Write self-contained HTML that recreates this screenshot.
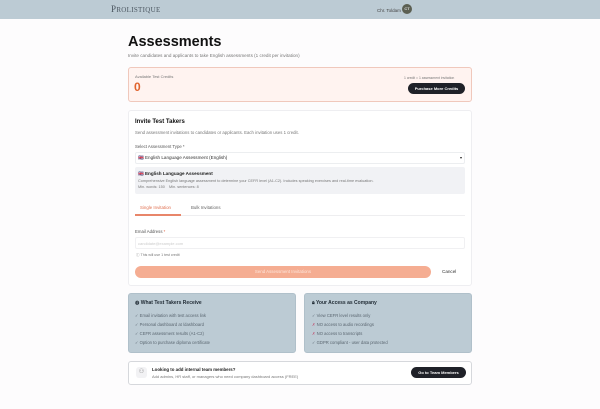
<!DOCTYPE html>
<html><head><style>
*{margin:0;padding:0;box-sizing:border-box}
body{width:600px;height:409px;background:#fdfcfd;font-family:"Liberation Sans",sans-serif;position:relative;overflow:hidden;color:#222}
.a{position:absolute}
.hdr{left:0;top:0;width:600px;height:19px;background:#bccbd4}
.s{font-size:4.3px;color:#777}
</style></head><body>
<div class="a hdr"></div>
<div class="a" style="left:111px;top:4px;font-family:'Liberation Serif',serif;font-size:9px;color:#4b5660;letter-spacing:.3px">P<span style="font-size:7px">ROLISTIQUE</span></div>
<div class="a" style="left:377px;top:8px;font-size:4.5px;color:#444">Chr. Toldam</div>
<div class="a" style="left:402px;top:4px;width:10px;height:10px;border-radius:50%;background:#5b5f52;color:#ddd;font-size:4px;text-align:center;line-height:10px;font-weight:bold">CT</div>

<div class="a" style="left:128px;top:34px;font-size:14.5px;font-weight:bold;color:#111">Assessments</div>
<div class="a s" style="left:128px;top:53px;font-size:4.6px">Invite candidates and applicants to take English assessments (1 credit per invitation)</div>

<div class="a" style="left:128px;top:67px;width:344px;height:35px;background:#fff3f0;border:1px solid #f0c8bc;border-radius:3px"></div>
<div class="a s" style="left:135px;top:74px;font-size:4px">Available Test Credits</div>
<div class="a" style="left:134px;top:80px;font-size:12px;font-weight:bold;color:#e0622c">0</div>
<div class="a s" style="left:404px;top:76px;font-size:3.4px">1 credit = 1 assessment invitation</div>
<div class="a" style="left:408px;top:83px;width:57px;height:11px;background:#1f2128;border-radius:6px;color:#fff;font-size:4px;font-weight:bold;text-align:center;line-height:11px">Purchase More Credits</div>

<div class="a" style="left:128px;top:110px;width:344px;height:176px;background:#fff;border:1px solid #eeeef1;border-radius:3px"></div>
<div class="a" style="left:135px;top:119px;font-size:6px;font-weight:bold;color:#111">Invite Test Takers</div>
<div class="a s" style="left:135px;top:130px">Send assessment invitations to candidates or applicants. Each invitation uses 1 credit.</div>
<div class="a s" style="left:135px;top:144px;color:#555">Select Assessment Type *</div>
<div class="a" style="left:135px;top:152px;width:330px;height:12px;border:1px solid #eceef0;border-radius:2px"></div>
<div class="a" style="left:138px;top:155px;font-size:4.6px;color:#333">🇬🇧 English Language Assessment (English)</div>
<div class="a" style="left:460px;top:155px;font-size:4px">▾</div>
<div class="a" style="left:135px;top:167px;width:330px;height:27px;background:#f1f2f5;border-radius:2px"></div>
<div class="a" style="left:138px;top:171px;font-size:4.6px;font-weight:bold;color:#222">🇬🇧 English Language Assessment</div>
<div class="a s" style="left:138px;top:179px;font-size:3.8px">Comprehensive English language assessment to determine your CEFR level (A1-C2). Includes speaking exercises and real-time evaluation.</div>
<div class="a s" style="left:138px;top:185px;font-size:3.8px">Min. words: 150 &nbsp;&nbsp; Min. sentences: 8</div>
<div class="a" style="left:140px;top:205px;font-size:4.4px;color:#e07050">Single Invitation</div>
<div class="a" style="left:191px;top:205px;font-size:4.4px;color:#666">Bulk Invitations</div>
<div class="a" style="left:135px;top:215px;width:330px;height:1px;background:#eeeef0"></div>
<div class="a" style="left:135px;top:214px;width:46px;height:1.5px;background:#e8866a"></div>
<div class="a s" style="left:135px;top:229px;color:#555">Email Address <span style="color:#e06040">*</span></div>
<div class="a" style="left:135px;top:237px;width:330px;height:12px;border:1px solid #f0f0f2;border-radius:2px"></div>
<div class="a" style="left:138px;top:241px;font-size:4px;color:#ccc">candidate@example.com</div>
<div class="a s" style="left:136px;top:253px;font-size:3.6px">ⓘ This will use 1 test credit</div>
<div class="a" style="left:135px;top:266px;width:296px;height:12px;background:#f5ad92;border-radius:6px;color:#fde6dc;font-size:4.4px;text-align:center;line-height:12px">Send Assessment Invitations</div>
<div class="a" style="left:442px;top:269px;font-size:4.6px;color:#333">Cancel</div>

<div class="a" style="left:128px;top:293px;width:168px;height:60px;background:#bccbd4;border:1px solid #b0c0ca;border-radius:3px"></div>
<div class="a" style="left:304px;top:293px;width:168px;height:60px;background:#bccbd4;border:1px solid #b0c0ca;border-radius:3px"></div>
<div class="a" style="left:135px;top:300px;font-size:5px;font-weight:bold;color:#1f2a33">◍ What Test Takers Receive</div>
<div class="a" style="left:135px;top:311px;font-size:4.2px;color:#5a6670;line-height:9px">✓ Email invitation with test access link<br>✓ Personal dashboard at /dashboard<br>✓ CEFR assessment results (A1-C2)<br>✓ Option to purchase diploma certificate</div>
<div class="a" style="left:312px;top:300px;font-size:5px;font-weight:bold;color:#1f2a33">🔒︎ Your Access as Company</div>
<div class="a" style="left:312px;top:311px;font-size:4.2px;color:#5a6670;line-height:9px">✓ View CEFR level results only<br><span style="color:#c05070">✗</span> NO access to audio recordings<br><span style="color:#c05070">✗</span> NO access to transcripts<br>✓ GDPR compliant - user data protected</div>

<div class="a" style="left:128px;top:361px;width:344px;height:24px;background:#fff;border:1px solid #d6d8dc;border-radius:3px"></div>
<div class="a" style="left:136px;top:367px;width:11px;height:11px;border-radius:3px;background:#f2f2f4;font-size:6px;text-align:center;line-height:11px;color:#888">⚇</div>
<div class="a" style="left:152px;top:367px;font-size:4.4px;font-weight:bold;color:#222">Looking to add internal team members?</div>
<div class="a s" style="left:152px;top:374px;font-size:4px">Add admins, HR staff, or managers who need company dashboard access (FREE)</div>
<div class="a" style="left:411px;top:367px;width:55px;height:11px;background:#1f2128;border-radius:6px;color:#fff;font-size:4px;font-weight:bold;text-align:center;line-height:11px">Go to Team Members</div>
</body></html>
